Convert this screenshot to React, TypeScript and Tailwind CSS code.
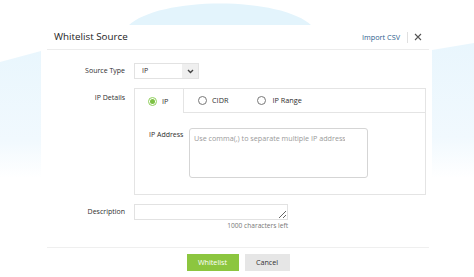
import React from "react";

function Radio({ checked }: { checked?: boolean }) {
  return checked ? (
    <span className="flex h-[9px] w-[9px] shrink-0 items-center justify-center rounded-full border border-[#8fcf5a] bg-white">
      <span className="h-[5px] w-[5px] rounded-full bg-[#7cc142]" />
    </span>
  ) : (
    <span className="block h-[9px] w-[9px] shrink-0 rounded-full border border-[#777] bg-white" />
  );
}

export default function App() {
  return (
    <div
      className="relative h-[277px] w-[474px] overflow-hidden bg-white text-[#2e2e2e]"
      style={{ fontFamily: '"Open Sans", "Noto Sans", sans-serif' }}
    >
      <svg className="absolute inset-0" width="474" height="277" viewBox="0 0 474 277">
        <defs>
          <linearGradient id="fadeL" x1="0" y1="0" x2="0" y2="1">
            <stop offset="0" stopColor="#e9f6fd" />
            <stop offset="0.7" stopColor="#f1f9fe" />
            <stop offset="1" stopColor="#ffffff" />
          </linearGradient>
        </defs>
        <path d="M128 26 C 158 -4, 282 -4, 312 26 Z" fill="#e3f4fc" />
        <path d="M0 62 L41 51 L41 178 L0 178 Z" fill="url(#fadeL)" />
        <path d="M432 50 L474 43 L474 178 L432 178 Z" fill="url(#fadeL)" />
      </svg>

      <div className="relative ml-[47px] mt-[25px] w-[382px] bg-white">
        <div className="flex h-[25px] items-center justify-between border-b border-[#ececec] pl-[7px] pr-[7px]">
          <span className="text-[9.8px] text-[#222]">Whitelist Source</span>
          <div className="flex items-center">
            <span className="text-[7.3px] text-[#2f5f8f]">Import CSV</span>
            <span className="ml-[7px] mr-[6px] h-[11px] w-px bg-[#e0e0e0]" />
            <svg width="8" height="8" viewBox="0 0 8 8" className="text-[#555]">
              <path d="M1 1 L7 7 M7 1 L1 7" stroke="currentColor" strokeWidth="1.1" />
            </svg>
          </div>
        </div>

        <div className="pt-[13px]">
          <div className="flex items-center">
            <div className="w-[78px] text-right text-[7px]">Source Type</div>
            <div className="ml-[9px] flex h-[16px] w-[65px] border border-[#e2e2e2]">
              <div className="flex flex-1 items-center pl-[7px] text-[7px]">IP</div>
              <div className="flex w-[16px] items-center justify-center bg-[#efefef]">
                <svg width="7" height="5" viewBox="0 0 7 5">
                  <path d="M1 1 L3.5 3.5 L6 1" stroke="#444" strokeWidth="1.4" fill="none" />
                </svg>
              </div>
            </div>
          </div>

          <div className="mt-[9px] flex items-start">
            <div className="w-[78px] pt-[4px] text-right text-[7px] leading-[12px]">IP Details</div>
            <div className="ml-[9px] w-[292px] border border-[#e4e4e4] pb-[16px]">
              <div className="flex h-[24px]">
                <div className="flex w-[49px] items-center gap-[5px] border-r border-[#e4e4e4] pl-[13px] text-[7.3px]">
                  <Radio checked />
                  <span>IP</span>
                </div>
                <div className="flex flex-1 items-center border-b border-[#e4e4e4] pl-[14px] text-[7.3px]">
                  <Radio />
                  <span className="ml-[5px]">CIDR</span>
                  <span className="ml-[29px]">
                    <Radio />
                  </span>
                  <span className="ml-[6px]">IP Range</span>
                </div>
              </div>
              <div className="flex items-start pl-[14px] pt-[15px]">
                <div className="w-[40px] pt-[1px] text-[7px] leading-[12px]">IP Address</div>
                <div className="h-[50px] w-[179px] rounded-[3px] border border-[#d5d5d5] px-[4px] py-[4px]">
                  <div className="w-[151px] overflow-hidden whitespace-nowrap text-[7.2px] leading-[10px] text-[#9a9a9a]">
                    Use comma(,) to separate multiple IP addresses
                  </div>
                </div>
              </div>
            </div>
          </div>

          <div className="mt-[9px] flex items-start">
            <div className="flex h-[16px] w-[78px] items-center justify-end text-[7px]">Description</div>
            <div className="ml-[9px] flex w-[154px] flex-col items-end">
              <textarea
                className="h-[16px] w-[154px] resize border border-[#e2e2e2] text-[8px] outline-none"
                style={{ fontFamily: '"Open Sans", sans-serif' }}
              />
              <span className="mt-[1px] text-[6.6px] leading-[9px] text-[#777]">1000 characters left</span>
            </div>
          </div>

          <div className="mt-[17px] flex justify-center gap-[6px] border-t border-[#efefef] pt-[6px]">
            <button className="h-[17px] w-[52px] bg-[#8cc63f] text-[7.2px] text-white">Whitelist</button>
            <button className="h-[17px] w-[45px] bg-[#e6e6e6] text-[7.2px] text-[#333]">Cancel</button>
          </div>
        </div>
      </div>
    </div>
  );
}
